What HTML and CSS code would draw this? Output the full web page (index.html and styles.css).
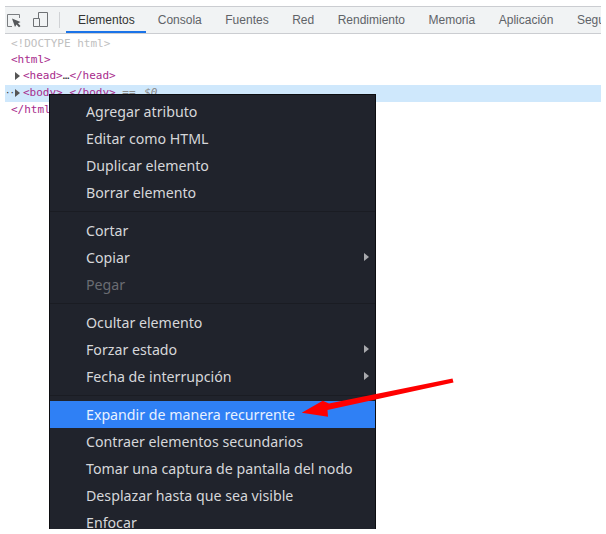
FILE: index.html
```html
<!DOCTYPE html>
<html lang="es">
<head>
<meta charset="utf-8">
<title>DevTools</title>
<link rel="stylesheet" href="styles.css">
</head>
<body>
<div class="devtools">
  <div class="toolbar">
    <svg class="tool-icon" width="16" height="16" viewBox="0 0 16 16"><path d="M5 14.500H.5V2.500h12V6" fill="none" stroke="#7a7d80" stroke-width="1"/><path d="M5 6.500l8.500 3.500-2.500 1.200 2.500 2.800-1.500 1.300-2.500-2.800L8 15z" fill="#54575a"/></svg>
    <svg class="tool-icon second" width="16" height="16" viewBox="0 0 16 16"><path d="M5.500 6V.5h9v14H6.500" fill="none" stroke="#6e7174" stroke-width="1"/><path d="M.5 6.500h6v8h-6z" fill="none" stroke="#6e7174" stroke-width="1"/></svg>
    <span class="divider"></span>
    <div class="tabs">
      <span class="tab active">Elementos</span>
      <span class="tab">Consola</span>
      <span class="tab">Fuentes</span>
      <span class="tab">Red</span>
      <span class="tab">Rendimiento</span>
      <span class="tab">Memoria</span>
      <span class="tab">Aplicación</span>
      <span class="tab">Seguridad</span>
    </div>
  </div>
  <div class="dom">
    <div class="line"><span class="doctype">&lt;!DOCTYPE html&gt;</span></div>
    <div class="line"><span class="tag">&lt;html&gt;</span></div>
    <div class="line nested"><span class="tri"></span><span class="tag">&lt;head&gt;</span><span class="dots">…</span><span class="tag">&lt;/head&gt;</span></div>
    <div class="line nested selected"><span class="ell">··</span><span class="tri"></span><span class="tag">&lt;body&gt;</span><span class="dots">…</span><span class="tag">&lt;/body&gt;</span><span class="eq"> == <i class="ref">$0</i></span></div>
    <div class="line"><span class="tag">&lt;/html&gt;</span></div>
  </div>
</div>
<div class="menu">
  <div class="group">
    <div class="item">Agregar atributo</div>
    <div class="item">Editar como HTML</div>
    <div class="item">Duplicar elemento</div>
    <div class="item">Borrar elemento</div>
  </div>
  <div class="group">
    <div class="item">Cortar</div>
    <div class="item sub">Copiar</div>
    <div class="item off">Pegar</div>
  </div>
  <div class="group">
    <div class="item">Ocultar elemento</div>
    <div class="item sub">Forzar estado</div>
    <div class="item sub">Fecha de interrupción</div>
  </div>
  <div class="group">
    <div class="item hot">Expandir de manera recurrente</div>
    <div class="item">Contraer elementos secundarios</div>
    <div class="item">Tomar una captura de pantalla del nodo</div>
    <div class="item">Desplazar hasta que sea visible</div>
    <div class="item">Enfocar</div>
  </div>
</div>
<svg class="arrow" width="606" height="534" viewBox="0 0 606 534"><path d="M452.500 378.500L329 403.500l-6.300-2.800-21 12L328 416.700l-.5-6.700L453.500 382.500z" fill="#ff0000"/></svg>
</body>
</html>
```
FILE: styles.css
```css
html, body {
  margin: 0;
  padding: 0;
  width: 606px;
  height: 534px;
  overflow: hidden;
  background: #fff;
}
.devtools {
  margin: 6px 5px 0;
  width: 596px;
}
.toolbar {
  display: flex;
  align-items: center;
  height: 26px;
  background: #f1f3f4;
  border-top: 1px solid #cbcdd1;
  border-bottom: 1px solid #cbcdd1;
  overflow: hidden;
  font: 12px "Liberation Sans", Arial, sans-serif;
  color: #5f6368;
}
.tool-icon {
  flex: none;
  margin-left: 2px;
}
.tool-icon.second {
  margin-left: 10px;
}
.divider {
  flex: none;
  width: 1px;
  height: 16px;
  background: #d0d2d5;
  margin-left: 10px;
}
.tabs {
  display: flex;
  height: 26px;
  margin-left: 6px;
}
.tab {
  flex: none;
  display: flex;
  align-items: center;
  padding: 0 11.750px;
  white-space: nowrap;
  box-sizing: border-box;
  height: 26px;
}
.tab.active {
  color: #333;
  width: 80px;
  border-bottom: 2px solid #1a73e8;
  padding: 2px 0 0 12px;
}
.dom {
  display: grid;
  grid-template-rows: 16.500px 16px 17px 16.500px 16.500px;
  font: 11px/16.500px "DejaVu Sans Mono", monospace;
  padding-top: 1.500px;
  color: #aa22aa;
}
.line {
  padding-left: 6px;
  white-space: pre;
  display: flex;
  align-items: center;
}
.nested {
  padding-left: 10px;
}
.selected {
  background: #cfe8fc;
  padding-left: 0;
}
.ell {
  width: 10px;
  color: #333;
  font-size: 9px;
  letter-spacing: -1px;
}
.doctype {
  color: #c0c0c0;
}
.tag {
  color: #a82a8c;
}
.dots {
  color: #333;
}
.eq {
  color: #8a8a8a;
}
.ref {
  margin-left: 2px;
}
.tri {
  width: 0;
  height: 0;
  border-left: 5px solid #555;
  border-top: 4px solid transparent;
  border-bottom: 4px solid transparent;
  margin: -1px 3px 0 0;
}
.menu {
  position: absolute;
  left: 49px;
  top: 94px;
  width: 325px;
  height: 434px;
  overflow: hidden;
  background: #20232c;
  border: 1px solid #0c0d10;
  border-bottom: none;
  font: 14.200px "Noto Sans", sans-serif;
  color: #d6d7da;
}
.group {
  padding: 5px 0;
  border-bottom: 1px solid #1a1c23;
}
.group:first-child {
  padding-top: 3px;
}
.item {
  position: relative;
  height: 27px;
  line-height: 27px;
  padding-left: 36px;
  white-space: nowrap;
}
.off {
  color: #6a6c72;
}
.hot {
  background: #2f80f5;
  color: #e8f1ff;
}
.sub::after {
  content: "";
  position: absolute;
  right: 6px;
  top: 9px;
  width: 0;
  height: 0;
  border-left: 5px solid #a8a9ad;
  border-top: 4px solid transparent;
  border-bottom: 4px solid transparent;
}
.arrow {
  position: absolute;
  left: 0;
  top: 0;
  pointer-events: none;
}
```
